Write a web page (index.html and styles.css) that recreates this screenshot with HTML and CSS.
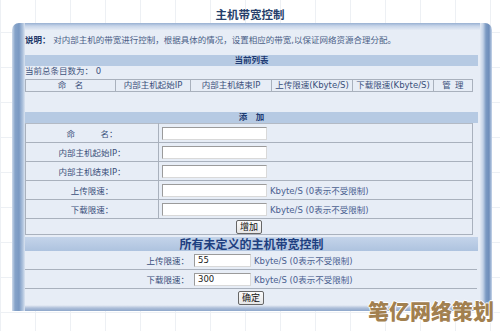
FILE: index.html
```html
<!DOCTYPE html>
<html lang="zh-CN">
<head>
    <meta charset="UTF-8">
    <title>主机带宽控制</title>
    <link rel="stylesheet" href="styles.css">
</head>
<body>
    <div class="page">
        <h1 class="title">主机带宽控制</h1>

        <div class="panel">
            <div class="content">
                <p class="desc"><b>说明：</b> 对内部主机的带宽进行控制，根据具体的情况，设置相应的带宽,以保证网络资源合理分配。</p>

                <div class="bar">当前列表</div>
                <p class="count">当前总条目数为： 0</p>
                <table class="list">
                    <tr>
                        <th class="c-name">命&emsp;名</th>
                        <th class="c-ip">内部主机起始IP</th>
                        <th class="c-ip2">内部主机结束IP</th>
                        <th class="c-rate">上传限速(Kbyte/S)</th>
                        <th class="c-rate">下载限速(Kbyte/S)</th>
                        <th>管&ensp;理</th>
                    </tr>
                </table>

                <div class="bar add-bar">添&emsp;加</div>
                <table class="form">
                    <tr>
                        <td class="label">命&emsp;&emsp;&emsp;名：</td>
                        <td class="value"><input class="field" type="text"></td>
                    </tr>
                    <tr>
                        <td class="label">内部主机起始IP：</td>
                        <td class="value"><input class="field" type="text"></td>
                    </tr>
                    <tr>
                        <td class="label">内部主机结束IP：</td>
                        <td class="value"><input class="field" type="text"></td>
                    </tr>
                    <tr>
                        <td class="label">上传限速：</td>
                        <td class="value"><input class="field" type="text"><span class="unit">Kbyte/S (0表示不受限制)</span></td>
                    </tr>
                    <tr>
                        <td class="label">下载限速：</td>
                        <td class="value"><input class="field" type="text"><span class="unit">Kbyte/S (0表示不受限制)</span></td>
                    </tr>
                    <tr class="actions">
                        <td colspan="2"><button class="btn">增加</button></td>
                    </tr>
                </table>

                <div class="bar big-bar">所有未定义的主机带宽控制</div>
                <table class="defaults">
                    <tr>
                        <td class="label">上传限速：</td>
                        <td class="value"><input class="field small" type="text" value="55"><span class="unit">Kbyte/S (0表示不受限制)</span></td>
                    </tr>
                    <tr>
                        <td class="label">下载限速：</td>
                        <td class="value"><input class="field small" type="text" value="300"><span class="unit">Kbyte/S (0表示不受限制)</span></td>
                    </tr>
                    <tr class="actions">
                        <td colspan="2"><button class="btn">确定</button></td>
                    </tr>
                </table>
            </div>
        </div>

        <div class="watermark">笔亿网络策划</div>
    </div>
</body>
</html>
```

FILE: styles.css
```css
:root {
    --frame-dark: #7e9cc5;
    --frame-light: #dbe5f2;
    --panel-bg: #e7edf6;
    --bar-bg: #b6cae3;
    --text-blue: #3a4f7a;
    --title-blue: #1d3b73;
    --line: #a9b1bd;
}

html, body {
    height: 100%;
}

body {
    margin: 0;
    background-color: #ffffff;
    background-image:
        linear-gradient(to right, #edf0f4 1px, transparent 1px),
        linear-gradient(to bottom, #edf0f4 1px, transparent 1px);
    background-size: 35px 35px;
    background-position: 0 32px;
    font-family: "DejaVu Sans", "Noto Sans CJK SC", sans-serif;
    font-size: 8.5px;
    color: var(--text-blue);
}

.page {
    position: relative;
    height: 331px;
    overflow: hidden;
}

.title {
    margin: 0;
    padding-top: 6px;
    height: 17px;
    line-height: 16px;
    text-align: center;
    font-family: "Noto Sans CJK SC", sans-serif;
    font-size: 11.5px;
    font-weight: 700;
    color: #263f6b;
}

/* framed panel */
.panel {
    margin: 0 8px 0 12px;
    padding: 7px 12px 6px 13px;
    border-radius: 7px 7px 0 0;
    background:
        linear-gradient(to right, #cfdbeb 0, #86a3c9 3px, #7a99c3 7px, #b3c6df 11px, #dce5f1 13px) left top / 13px 100% no-repeat,
        linear-gradient(to right, #e3eaf4 0, #c3d2e7 3px, #7b9ac3 6px, #6d8dba 9px, #c8d6ea 12px) right top / 12px 100% no-repeat,
        linear-gradient(to bottom, #e9eef6 0, #aebfd9 3px, #8ea7cb 6px) left bottom / 100% 6px no-repeat,
        linear-gradient(to bottom, #98b0d2 0, #c7d5e9 3px, #e4eaf4 7px) left top / 100% 7px no-repeat;
}

.content {
    background: var(--panel-bg);
    height: 275px;
}

.desc {
    margin: 0;
    height: 20px;
    line-height: 20px;
    color: #4a5e86;
    white-space: nowrap;
}

.desc b {
    color: #1d3768;
}

.bar {
    margin: 5px 2px 0 0;
    height: 11px;
    line-height: 11px;
    background: var(--bar-bg);
    text-align: center;
    font-weight: 700;
    color: var(--title-blue);
}

.count {
    margin: 0;
    height: 11px;
    line-height: 11px;
    color: #3f547d;
}

table {
    border-collapse: collapse;
    width: 448px;
}

.list {
    margin-top: 2px;
}

.list th {
    height: 11px;
    padding: 0;
    border: 1px solid var(--line);
    font-weight: 400;
    line-height: 11px;
    white-space: nowrap;
}

.c-name { width: 89px; }
.c-ip { width: 74px; }
.c-ip2 { width: 80px; }
.c-rate { width: 80px; }

.add-bar {
    margin-top: 20px;
}

.form td {
    height: 18px;
    padding: 0;
    border: 1px solid var(--line);
    border-top-color: #b3bac5;
}

.form .label {
    width: 132px;
    text-align: center;
    white-space: nowrap;
}

.value {
    padding-left: 2px !important;
    white-space: nowrap;
}

.field {
    box-sizing: border-box;
    width: 105px;
    height: 13px;
    margin: 0 0 0 1px;
    padding: 0 3px;
    border: 1px solid;
    border-color: #9b9b9b #d9d9d9 #d9d9d9 #9b9b9b;
    background: #ffffff;
    font: inherit;
    color: #222;
    vertical-align: middle;
}

.field.small {
    width: 57px;
}

.unit {
    margin-left: 3px;
    color: #4a6090;
    vertical-align: middle;
}

.actions td {
    height: 15px;
    text-align: center;
}

.btn {
    box-sizing: border-box;
    height: 14px;
    padding: 0 3px;
    border: 1px solid #666;
    border-radius: 2px;
    background: linear-gradient(#fbfbfb, #e6e6e6);
    font-family: "Noto Sans CJK SC", sans-serif;
    font-size: 9px;
    line-height: 12px;
    color: #111;
    vertical-align: middle;
}

.big-bar {
    margin-top: 2px;
    margin-right: 2px;
    height: 14px;
    line-height: 14px;
    font-family: "Noto Sans CJK SC", sans-serif;
    font-size: 12px;
    color: #1e3f80;
    background: linear-gradient(#c4d4ea, #aec3df);
}

.defaults {
    width: 452px;
}

.defaults td {
    height: 18px;
    padding: 0;
    border-bottom: 1px solid var(--line);
}

.defaults .label {
    width: 164px;
    padding-right: 2px;
    text-align: right;
}

.defaults .actions td {
    height: 17px;
    border-bottom: none;
}

.watermark {
    position: absolute;
    left: 368px;
    top: 300px;
    font-family: "Noto Sans CJK SC", sans-serif;
    font-size: 21px;
    font-weight: 900;
    line-height: 21px;
    color: #a2804f;
    text-shadow: 1px 0 0 #fff, -1px 0 0 #fff, 0 1px 0 #fff, 0 -1px 0 #fff;
    white-space: nowrap;
}
```
